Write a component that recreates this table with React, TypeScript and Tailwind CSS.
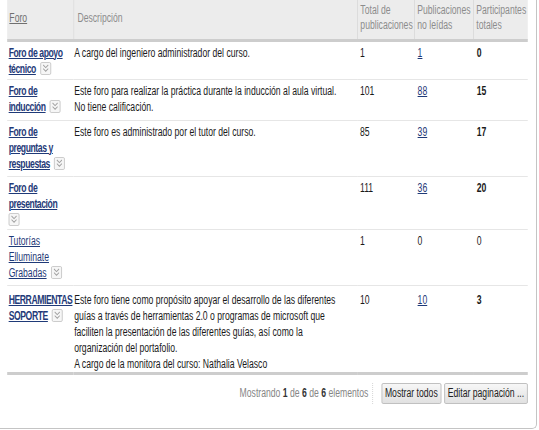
import React from 'react';

type Row = {
  name: string[];
  iconOwnLine?: boolean;
  bold: boolean;
  desc: string[];
  total: string;
  unread: string;
  unreadLink: boolean;
  people: string;
  peopleBold: boolean;
  h: string;
  pt: string;
};

const rows: Row[] = [
  { name: ['Foro de apoyo', 'técnico'], bold: true, desc: ['A cargo del ingeniero administrador del curso.'], total: '1', unread: '1', unreadLink: true, people: '0', peopleBold: true, h: 'h-[39px]', pt: 'pt-[3px]' },
  { name: ['Foro de', 'inducción'], bold: true, desc: ['Este foro para realizar la práctica durante la inducción al aula virtual.', 'No tiene calificación.'], total: '101', unread: '88', unreadLink: true, people: '15', peopleBold: true, h: 'h-[41px]', pt: 'pt-[3px]' },
  { name: ['Foro de', 'preguntas y', 'respuestas'], bold: true, desc: ['Este foro es administrado por el tutor del curso.'], total: '85', unread: '39', unreadLink: true, people: '17', peopleBold: true, h: 'h-[56px]', pt: 'pt-[3px]' },
  { name: ['Foro de', 'presentación'], iconOwnLine: true, bold: true, desc: [], total: '111', unread: '36', unreadLink: true, people: '20', peopleBold: true, h: 'h-[53px]', pt: 'pt-[3px]' },
  { name: ['Tutorías', 'Elluminate', 'Grabadas'], bold: false, desc: [], total: '1', unread: '0', unreadLink: false, people: '0', peopleBold: false, h: 'h-[56px]', pt: 'pt-[3px]' },
  {
    name: ['HERRAMIENTAS', 'SOPORTE'],
    bold: true,
    desc: [
      'Este foro tiene como propósito apoyar el desarrollo de las diferentes',
      'guías a través de herramientas 2.0 o programas de microsoft que',
      'faciliten la presentación de las diferentes guías, así como la',
      'organización del portafolio.',
      'A cargo de la monitora del curso: Nathalia Velasco',
    ],
    total: '10', unread: '10', unreadLink: true, people: '3', peopleBold: true, h: 'h-[88px]', pt: 'pt-[6px]',
  },
];

const font = { fontFamily: "'Liberation Sans', Arial, sans-serif" };

// the old LMS screenshot is squeezed sideways, so the panel is drawn wide and scaled on x
function MenuIcon() {
  return (
    <span className="inline-flex align-middle ml-[6px] mb-[2px] w-[15px] h-[13px] border border-[#c4c4c4] rounded-[2px] bg-[#f6f6f6] items-center justify-center">
      <svg width="11" height="9" viewBox="0 0 11 9" fill="none" stroke="#a0a0a0" strokeWidth="1.1">
        <path d="M2 1 L5.5 3.6 L9 1" />
        <path d="M2 4.6 L5.5 7.2 L9 4.6" />
      </svg>
    </span>
  );
}

function NameCell({ row }: { row: Row }) {
  const last = row.name.length - 1;
  const cls = `text-[#1f3a78] underline ${row.bold ? 'font-bold tracking-[-0.6px]' : ''}`;
  return (
    <div className="leading-[16px] whitespace-nowrap">
      {row.name.map((p, i) => (
        <div key={i}>
          <a className={cls}>{p}</a>
          {i === last && !row.iconOwnLine && <MenuIcon />}
        </div>
      ))}
      {row.iconOwnLine && (
        <div className="-ml-[6px]">
          <MenuIcon />
        </div>
      )}
    </div>
  );
}

export default function App() {
  return (
    <div className="w-[539px] h-[430px] bg-white text-[12px] text-[#1a1a1a]" style={font}>
      <div className="w-[537px] h-[429px] border-r border-b border-[#c4c4c4] rounded-br-[5px] overflow-hidden">
        <div className="w-[746px] origin-top-left scale-x-[0.72] pl-[10px]">
          <table className="w-[723px] table-fixed border-collapse">
            <colgroup>
              <col className="w-[92px]" />
              <col className="w-[394px]" />
              <col className="w-[79px]" />
              <col className="w-[82px]" />
              <col className="w-[76px]" />
            </colgroup>
            <thead>
              <tr className="bg-[#ececec] h-[40px] text-[#8c8c8c] border-b-[3px] border-[#cdcdcd]">
                <th className="font-normal text-left align-middle pl-[3px] pb-[2px] border-r border-[#d6d6d6]">
                  <a className="underline text-[#707070]">Foro</a>
                </th>
                <th className="font-normal text-left align-middle pl-[5px] pb-[2px] border-r border-[#d6d6d6]">Descripción</th>
                <th className="font-normal text-left align-middle pl-[4px] pb-[2px] leading-[15px] border-r border-[#d6d6d6]">Total de publicaciones</th>
                <th className="font-normal text-left align-middle pl-[4px] pb-[2px] leading-[15px] border-r border-[#d6d6d6]">Publicaciones no leídas</th>
                <th className="font-normal text-left align-middle pl-[4px] pb-[2px] leading-[15px]">Participantes totales</th>
              </tr>
            </thead>
            <tbody>
              {rows.map((r, i) => (
                <tr key={i} className={`${r.h} ${i < rows.length - 1 ? 'border-b border-[#e6e6e6]' : 'border-b-[3px] border-[#cdcdcd]'}`}>
                  <td className={`align-top pl-[2px] ${r.pt}`}>
                    <NameCell row={r} />
                  </td>
                  <td className={`align-top pl-[1px] ${r.pt} leading-[16px] whitespace-nowrap`}>
                    {r.desc.map((d, j) => (
                      <div key={j}>{d}</div>
                    ))}
                  </td>
                  <td className={`align-top pl-[4px] ${r.pt} leading-[16px]`}>{r.total}</td>
                  <td className={`align-top pl-[5px] ${r.pt} leading-[16px]`}>
                    {r.unreadLink ? <a className="underline text-[#1f3a78]">{r.unread}</a> : r.unread}
                  </td>
                  <td className={`align-top pl-[5px] ${r.pt} leading-[16px] ${r.peopleBold ? 'font-bold' : ''}`}>{r.people}</td>
                </tr>
              ))}
            </tbody>
          </table>
          <div className="w-[723px] flex justify-end items-center mt-[8px] gap-[4px]">
            <span className="text-[#858585] pr-[5px] mr-[8px] border-r border-dotted border-[#cfcfcf] leading-[21px]">
              Mostrando <b className="text-[#333]">1</b> de <b className="text-[#333]">6</b> de <b className="text-[#333]">6</b> elementos
            </span>
            <button className="h-[21px] px-[4px] border border-[#b6b6b6] rounded-[2px] bg-gradient-to-b from-[#f7f7f7] to-[#e1e1e1] text-[#222] leading-[19px]">Mostrar todos</button>
            <button className="h-[21px] px-[4px] border border-[#b6b6b6] rounded-[2px] bg-gradient-to-b from-[#f7f7f7] to-[#e1e1e1] text-[#222] leading-[19px]">Editar paginación ...</button>
          </div>
        </div>
      </div>
    </div>
  );
}
